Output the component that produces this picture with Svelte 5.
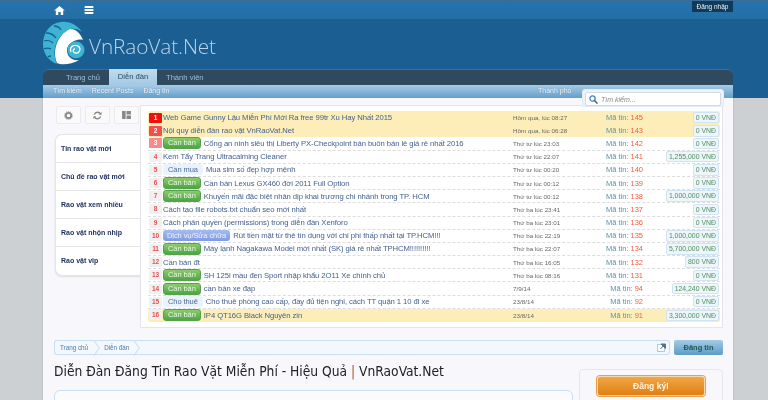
<script>
	const rows = [
		{ n: 1, title: "Web Game Gunny Lậu Miễn Phí Mới Ra free 99tr Xu Hay Nhất 2015", date: "Hôm qua, lúc 08:27", id: 145, price: "0 VNĐ", sticky: true },
		{ n: 2, title: "Nội quy diễn đàn rao vặt VnRaoVat.Net", date: "Hôm qua, lúc 06:28", id: 143, price: "0 VNĐ", sticky: true },
		{ n: 3, tag: "Cần bán", kind: "green", title: "Cổng an ninh siêu thị Liberty PX-Checkpoint bán buôn bán lẻ giá rẻ nhất 2016", date: "Thứ tư lúc 23:03", id: 142, price: "0 VNĐ" },
		{ n: 4, title: "Kem Tẩy Trang Ultracalming Cleaner", date: "Thứ tư lúc 22:07", id: 141, price: "1,255,000 VNĐ" },
		{ n: 5, tag: "Cần mua", kind: "pale", title: "Mua sim số đẹp hợp mệnh", date: "Thứ tư lúc 00:20", id: 140, price: "0 VNĐ" },
		{ n: 6, tag: "Cần bán", kind: "green", title: "Cần bán Lexus GX460 đời 2011 Full Option", date: "Thứ tư lúc 00:12", id: 139, price: "0 VNĐ" },
		{ n: 7, tag: "Cần bán", kind: "green", title: "Khuyến mãi đặc biệt nhân dịp khai trương chi nhánh trong TP. HCM", date: "Thứ tư lúc 00:12", id: 138, price: "1,000,000 VNĐ" },
		{ n: 8, title: "Cách tạo file robots.txt chuẩn seo mới nhất", date: "Thứ ba lúc 23:41", id: 137, price: "0 VNĐ" },
		{ n: 9, title: "Cách phân quyền (permissions) trong diễn đàn Xenforo", date: "Thứ ba lúc 23:01", id: 136, price: "0 VNĐ" },
		{ n: 10, tag: "Dịch vụ/Sửa chữa", kind: "blue", title: "Rút tiền mặt từ thẻ tín dụng với chi phí thấp nhất tại TP.HCM!!!", date: "Thứ ba lúc 22:19", id: 135, price: "1,000,000 VNĐ" },
		{ n: 11, tag: "Cần bán", kind: "green", title: "Máy lạnh Nagakawa Model mới nhất (SK) giá rẻ nhất TPHCM!!!!!!!!!!", date: "Thứ ba lúc 22:07", id: 134, price: "5,700,000 VNĐ" },
		{ n: 12, title: "Cần bán đt", date: "Thứ ba lúc 16:05", id: 132, price: "800 VNĐ" },
		{ n: 13, tag: "Cần bán", kind: "green", title: "SH 125i mầu đen Sport nhập khẩu 2O11 Xe chính chủ", date: "Thứ ba lúc 08:16", id: 131, price: "0 VNĐ" },
		{ n: 14, tag: "Cần bán", kind: "green", title: "cần bán xe đạp", date: "7/9/14", id: 94, price: "124,240 VNĐ" },
		{ n: 15, tag: "Cho thuê", kind: "pale", title: "Cho thuê phòng cao cấp, đầy đủ tiện nghi, cách TT quận 1 10 đi xe", date: "23/8/14", id: 92, price: "0 VNĐ" },
		{ n: 16, tag: "Cần bán", kind: "green", title: "IP4 QT16G Black Nguyên zin", date: "23/8/14", id: 91, price: "3,300,000 VNĐ", sticky: true }
	];
	const tabs = ["Tin rao vặt mới", "Chủ đề rao vặt mới", "Rao vặt xem nhiều", "Rao vặt nhộn nhịp", "Rao vặt vip"];
</script>

<div class="page">
	<header class="top">
		<div class="top-line"></div>
		<div class="top-inner">
			<a class="top-ico home" href="#home" aria-label="Home">
				<svg width="11" height="9" viewBox="0 0 13 11"><path d="M6.500 0 13 5.600h-2V11H8V7.200H5V11H2V5.600H0z" fill="#fff"/></svg>
			</a>
			<a class="top-ico" href="#menu" aria-label="Menu">
				<svg width="10" height="8" viewBox="0 0 11 10"><path d="M1 0h9a1 1 0 0 1 1 1v1.600H0V1a1 1 0 0 1 1-1zM0 3.700h11v2.600H0zM0 7.400h11V9a1 1 0 0 1-1 1H1a1 1 0 0 1-1-1z" fill="#fff"/></svg>
			</a>
			<a class="login" href="#login">Đăng nhập</a>
		</div>
	</header>

	<div class="brand">
		<svg class="logo" width="42" height="44" viewBox="0 0 42 44">
			<path d="M39 11C33 2 24 0 18 1 7 2 0 12 0 23c0 10 6 17 14 20C9 32 11 16 27 8c4-1 9 0 12 3z" fill="#3db4d2"/>
			<path d="M3 12c4 0 8 2 10 5M1 20c3-1 7 0 9 2M1 28c2-1 5-1 7 0M5 36c1-1 2-1 3-1M11 5c3 0 6 2 7 4" stroke="#1a5e92" stroke-width="1.300" fill="none"/>
			<path d="M40 19C37 11 32 8 27 8 14 14 9 30 14 42c4 2 14 2 22-3-8 1-12-4-12-10 0-6 9-12 16-10z" fill="#fff"/>
			<circle cx="33" cy="29" r="8.500" fill="#3db4d2"/>
			<path d="M28 31c-2-5 3-8 7-6 4 3 1 8-3 7-3-1-2-4 0-4" stroke="#fff" stroke-width="1.300" fill="none"/>
		</svg>
		<span class="site-name">VnRaoVat.Net</span>
	</div>

	<nav class="nav">
		<div class="tabs-row">
			<a href="#a" class="nav-tab">Trang chủ</a>
			<a href="#b" class="nav-tab on">Diễn đàn</a>
			<a href="#c" class="nav-tab">Thành viên</a>
		</div>
		<div class="sub-row">
			<a href="#d">Tìm kiếm</a>
			<a href="#e">Recent Posts</a>
			<a href="#f">Đăng tin</a>
			<a href="#g" class="city">Thành phố</a>
		</div>
		<div class="search">
			<div class="search-box">
				<svg width="9" height="9" viewBox="0 0 9 9"><circle cx="3.500" cy="3.500" r="2.600" fill="none" stroke="#4a7fc0" stroke-width="1.300"/><path d="M5.500 5.500 8.500 8.500" stroke="#3a5f90" stroke-width="1.500"/></svg>
				<span>Tìm kiếm...</span>
			</div>
		</div>
	</nav>

	<main class="content">
		<div class="columns">
			<aside class="side">
				<div class="tools">
					<button aria-label="Settings"><svg width="9" height="9" viewBox="0 0 10 10"><circle cx="5" cy="5" r="3" fill="none" stroke="#888" stroke-width="2"/><circle cx="5" cy="5" r="4.400" fill="none" stroke="#999" stroke-width="1.100" stroke-dasharray="1.200 1"/></svg></button>
					<button aria-label="Refresh"><svg width="9" height="9" viewBox="0 0 10 10"><path d="M8.500 3.500A3.800 3.800 0 0 0 1.500 4M1.500 6.500A3.800 3.800 0 0 0 8.500 6" fill="none" stroke="#888" stroke-width="1.500"/><path d="M9.500 1v3.200H6.500zM.5 9V5.800h3z" fill="#888"/></svg></button>
					<button aria-label="Layout"><svg width="9" height="8" viewBox="0 0 10 9"><path d="M0 0h4v9H0zM5 0h5v4H5zM5 5h5v4H5z" fill="#888"/></svg></button>
				</div>
				<ul class="side-tabs">
					{#each tabs as t}
						<li>{t}</li>
					{/each}
				</ul>
			</aside>
			<section class="list">
				{#each rows as r}
					<div class="row" class:sticky={r.sticky}>
						<span class="num" class:n1={r.n === 1} class:n2={r.n === 2} class:n3={r.n === 3}>{r.n}</span>
						<span class="title">
							{#if r.tag}<span class="tag {r.kind}">{r.tag}</span>{/if}
							<a href="#t">{r.title}</a>
						</span>
						<span class="date">{r.date}</span>
						<span class="ma">Mã tin: <b>{r.id}</b></span>
						<span class="price-cell"><span class="price">{r.price}</span></span>
					</div>
				{/each}
			</section>
		</div>

		<div class="crumbs">
			<a href="#a" class="crumb">Trang chủ</a>
			<a href="#b" class="crumb">Diễn đàn</a>
			<span class="ext"><svg width="9" height="9" viewBox="0 0 9 9"><rect x=".5" y="1.500" width="7" height="7" fill="#fff" stroke="#b4c8dc"/><path d="M4 1h4.500v4.500z M3.500 6 6 3" fill="#5a7288" stroke="#5a7288"/></svg></span>
			<a href="#p" class="post">Đăng tin</a>
		</div>

		<div class="lower">
			<div class="lower-main">
				<h1>Diễn Đàn Đăng Tin Rao Vặt Miễn Phí - Hiệu Quả <i>|</i> VnRaoVat.Net</h1>
				<div class="panel-main"></div>
			</div>
			<div class="panel-side"><a href="#r" class="signup">Đăng ký!</a></div>
		</div>
	</main>
</div>

<style>
	:global(body) {
		background: #ccd0d3;
		font-family: "Liberation Sans", Arial, sans-serif;
		height: 400px;
		overflow: hidden;
	}
	a {
		text-decoration: none;
		color: inherit;
	}
	.page {
		background: linear-gradient(#1a5e92 0, #1a5e92 98px, #ccd0d3 98px);
		height: 400px;
		overflow: hidden;
		filter: blur(0.3px);
	}
	.top {
		background: linear-gradient(#2674ac, #236ea7);
		height: 19px;
	}
	.top-line {
		height: 1px;
		background: #3d6b93;
	}
	.top-inner {
		display: flex;
		height: 18px;
		margin: 0 35px 0 43px;
	}
	.top-ico {
		width: 33px;
		display: flex;
		align-items: center;
		justify-content: center;
		border-right: 1px solid #2b6ea0;
	}
	.top-ico:nth-child(2) {
		border-right: none;
		width: 24px;
	}
	.login {
		margin-left: auto;
		background: #0f3a5c;
		color: #f0f4f8;
		font-size: 6.500px;
		height: 11px;
		line-height: 11px;
		width: 41px;
		text-align: center;
	}
	.brand {
		display: flex;
		align-items: center;
		height: 50px;
		padding-left: 43px;
		background: #1a5e92;
	}
	.logo {
		margin-top: -2px;
	}
	.site-name {
		color: #b8d4e6;
		font-family: "Open Sans", sans-serif;
		font-weight: 300;
		font-size: 20.800px;
		margin-left: 4px;
		margin-top: 4px;
		letter-spacing: -0.1px;
	}
	.nav {
		position: relative;
		margin: 0 35px 0 43px;
		height: 29px;
	}
	.tabs-row {
		display: flex;
		height: 16px;
		background: #2f4a5f;
		border-top: 1px solid #3d7099;
		border-radius: 6px 6px 0 0;
		box-sizing: border-box;
		padding-left: 23px;
	}
	.nav-tab {
		color: #9cbdd6;
		font-size: 7.600px;
		line-height: 15px;
		width: 43px;
	}
	.nav-tab.on {
		background: linear-gradient(#c0dcee, #a4c9e4);
		color: #2c4a60;
		width: 48px;
		text-align: center;
		margin: -1px 9px 0 0;
		line-height: 16px;
		height: 16px;
	}
	.sub-row {
		display: flex;
		gap: 10px;
		height: 13px;
		background: linear-gradient(#a6cbe6, #659fca);
		padding-left: 10px;
		color: #f4f9fd;
		font-size: 7px;
		line-height: 12px;
		text-shadow: 0 0 1px #4a7fa8;
	}
	.city {
		position: absolute;
		left: 495px;
	}
	.search {
		position: absolute;
		left: 539px;
		top: 20px;
		width: 142px;
		height: 18px;
		background: #eef3fa;
		border-radius: 3px 3px 0 0;
		padding: 2px 2px 0;
		box-sizing: border-box;
		z-index: 2;
		border: 1px solid #e2ecf6;
	}
	.search-box {
		display: flex;
		align-items: center;
		gap: 3px;
		height: 12px;
		background: #fff;
		border: 1px solid #d5dae0;
		border-radius: 2px;
		padding-left: 3px;
		color: #888;
		font-size: 7px;
		font-style: italic;
	}
	.content {
		margin: 0 35px 0 43px;
		background: #f8f8fc;
		height: 302px;
		padding: 7px 10px 0 11px;
		box-sizing: border-box;
		box-shadow: 0 0 1px #8a8f94;
	}
	.columns {
		display: flex;
		align-items: flex-start;
		height: 223px;
	}
	.side {
		width: 86px;
		flex: none;
		padding-top: 1px;
	}
	.tools {
		display: flex;
		gap: 4px;
		margin-left: 2px;
	}
	.tools button {
		width: 25px;
		height: 18px;
		padding: 0;
		display: flex;
		align-items: center;
		justify-content: center;
		background: #fafafa;
		border: 1px solid #ebebed;
		border-radius: 2px;
	}
	.side-tabs {
		list-style: none;
		margin: 10px 0 0 1px;
		padding: 0;
		border: 1px solid #e4e4e8;
		border-right: none;
		border-radius: 7px 0 0 7px;
		background: #fff;
		box-shadow: 0 1px 2px #ddd;
	}
	.side-tabs li {
		height: 28px;
		line-height: 27px;
		padding-left: 5px;
		color: #1d2d5c;
		font-size: 7px;
		font-weight: bold;
		border-bottom: 1px solid #e6e6e6;
		box-sizing: border-box;
	}
	.side-tabs li:last-child {
		border-bottom: none;
	}
	.list {
		flex: 1;
		background: #fff;
		border: 1px solid #e4e4ea;
		padding: 5px 2px 5px 7px;
		height: 223px;
		box-sizing: border-box;
	}
	.row {
		display: flex;
		align-items: center;
		height: 13.200px;
		box-sizing: border-box;
		border-bottom: 1px dashed #ddd;
		font-size: 7.700px;
		letter-spacing: -0.08px;
		color: #45618f;
		padding: 0 1px;
		white-space: nowrap;
	}
	.row.sticky {
		background: #fdeeb9;
		border-bottom: none;
		border-radius: 2px;
	}
	.num {
		width: 13px;
		height: 10px;
		flex: none;
		background: #f0f0f0;
		color: #e85050;
		font-size: 6.500px;
		font-weight: bold;
		line-height: 10px;
		text-align: center;
		border-radius: 1px;
		margin-right: 1px;
	}
	.n1 {
		background: #f01010;
		color: #fff;
	}
	.n2 {
		background: #f54c4c;
		color: #fff;
	}
	.n3 {
		background: #fa8a8a;
		color: #fff;
	}
	.title {
		flex: 1;
		min-width: 0;
		display: flex;
		align-items: center;
		gap: 3px;
	}
	.tag {
		display: inline-block;
		font-size: 7.500px;
		line-height: 11px;
		height: 11px;
		padding: 0 4px;
		border-radius: 3px;
	}
	.tag.green {
		background: linear-gradient(#8ccb6c, #4da543);
		color: #eaf6e6;
		border: 1px solid #55a24a;
		height: 10px;
		line-height: 10px;
	}
	.tag.pale {
		background: #eaf3fb;
		color: #4d6a99;
		padding: 0 5px;
	}
	.tag.blue {
		background: linear-gradient(#a6bcf0, #7d9be4);
		color: #eef2fc;
	}
	.date {
		width: 94px;
		flex: none;
		font-size: 6.250px;
		letter-spacing: 0;
		color: #666;
	}
	.ma {
		width: 36px;
		flex: none;
		color: #5d93a8;
		font-size: 7.500px;
		letter-spacing: 0;
		white-space: nowrap;
		display: flex;
		justify-content: flex-end;
		gap: 2px;
	}
	.ma b {
		color: #f25c3c;
		font-weight: normal;
	}
	.price-cell {
		width: 76px;
		flex: none;
		display: flex;
		justify-content: flex-end;
	}
	.price {
		background: #eef6fb;
		border: 1px solid #cfe3f0;
		border-radius: 2px;
		color: #4d8f5f;
		font-size: 6.900px;
		letter-spacing: 0;
		line-height: 9.500px;
		padding: 0 2px;
	}
	.crumbs {
		display: flex;
		align-items: center;
		height: 15px;
		margin-top: 12px;
	}
	.crumb {
		position: relative;
		height: 13px;
		line-height: 13px;
		font-size: 6.300px;
		color: #5878a0;
		padding: 0 12px 0 3px;
		background: #f2f8fd;
		border: 1px solid #c7dff2;
		border-width: 1px 0;
	}
	.crumb:first-child {
		border-left: 1px solid #c7dff2;
		border-radius: 3px 0 0 3px;
		padding: 0 13px 0 5px;
	}
	.crumb::after {
		content: "";
		position: absolute;
		right: 2px;
		top: 2px;
		width: 9px;
		height: 9px;
		border: 1px solid #c7dff2;
		border-width: 1px 1px 0 0;
		transform: rotate(45deg) skew(10deg, 10deg);
	}
	.ext {
		flex: 1;
		height: 13px;
		display: flex;
		justify-content: flex-end;
		align-items: center;
		padding-right: 3px;
		background: #f2f8fd;
		border: 1px solid #c7dff2;
		border-left: none;
		border-radius: 0 3px 3px 0;
	}
	.post {
		width: 49px;
		height: 15px;
		line-height: 15px;
		margin-left: 4px;
		text-align: center;
		color: #1f5a4e;
		font-size: 7.500px;
		font-weight: bold;
		background: linear-gradient(#a4cbe6, #5c9bc8);
		border-radius: 2px;
	}
	.lower {
		display: flex;
		gap: 6px;
		margin-top: 14px;
		align-items: flex-start;
	}
	.lower-main {
		flex: 1;
		min-width: 0;
	}
	h1 {
		margin: -7px 0 0;
		font-size: 13.700px;
		line-height: 18px;
		font-weight: normal;
		color: #222;
		font-family: "DejaVu Sans", sans-serif;
		font-stretch: condensed;
		white-space: nowrap;
	}
	h1 i {
		font-style: normal;
		color: #b05030;
	}
	.panel-main {
		height: 30px;
		margin-top: 10px;
		background: #fbfbfd;
		border: 1px solid #c7dff2;
		border-radius: 6px 6px 0 0;
	}
	.panel-side {
		width: 144px;
		height: 40px;
		flex: none;
		box-sizing: border-box;
		border: 1px solid #e6e6ec;
		border-radius: 4px 4px 0 0;
		padding: 6px 17px;
	}
	.signup {
		display: block;
		height: 18px;
		line-height: 18px;
		text-align: center;
		background: linear-gradient(#f0a64a, #e08010);
		border: 1px solid #f8d8a8;
		border-radius: 3px;
		color: #fff3e0;
		font-size: 8.500px;
		font-weight: bold;
		box-shadow: 0 0 0 1px #e8a050;
	}
</style>
